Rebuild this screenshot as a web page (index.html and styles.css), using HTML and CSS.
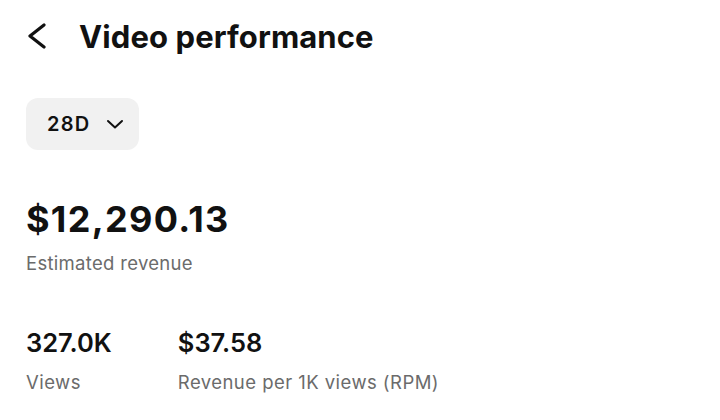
FILE: index.html
```html
<!DOCTYPE html>
<html>
<head>
<meta charset="utf-8">
<link rel="stylesheet" href="styles.css">
</head>
<body>
<div class="page">
  <header class="header">
    <svg class="back" width="20" height="26" viewBox="0 0 20 26"><path d="M17 2 L3 13 L17 24" fill="none" stroke="#111" stroke-width="3.2" stroke-linecap="round" stroke-linejoin="round"/></svg>
    <h1 class="title">Video performance</h1>
  </header>
  <button class="pill">
    <span class="pill-text">28D</span>
    <svg class="chev" width="18" height="10" viewBox="0 0 18 10"><path d="M2 2 L9 8.5 L16 2" fill="none" stroke="#111" stroke-width="2" stroke-linecap="round" stroke-linejoin="round"/></svg>
  </button>
  <section class="main-stat">
    <div class="big">$12,290.13</div>
    <div class="label">Estimated revenue</div>
  </section>
  <section class="stats">
    <div class="stat">
      <div class="num">327.0K</div>
      <div class="label">Views</div>
    </div>
    <div class="stat">
      <div class="num">$37.58</div>
      <div class="label">Revenue per 1K views (RPM)</div>
    </div>
  </section>
</div>
</body>
</html>
```
FILE: styles.css
```css
* { box-sizing: border-box; }
html, body { margin: 0; padding: 0; background: #fff; }
body { font-family: Inter, "Noto Sans", sans-serif; color: #111; }
.page { padding: 0 0 0 26px; }
.header { display: flex; align-items: center; height: 72px; }
.back { margin-left: 1px; margin-right: 32px; }
.title { font-size: 31px; font-weight: 700; margin: 0; letter-spacing: 0.1px; }
.pill { display: flex; align-items: center; gap: 15px; margin-top: 26px; height: 52px; padding: 0 15px 0 21px; border: 0; border-radius: 12px; background: #f1f1f1; font-family: inherit; color: #111; }
.pill-text { font-size: 20px; font-weight: 600; letter-spacing: 1.3px; }
.main-stat { margin-top: 48px; }
.big { font-size: 36px; font-weight: 700; line-height: 42px; letter-spacing: 1.3px; }
.label { font-size: 18.5px; color: #6b6b6b; margin-top: 12px; letter-spacing: 0.3px; }
.stats { display: flex; gap: 66px; margin-top: 54px; }
.num { font-size: 25.5px; font-weight: 600; line-height: 30px; letter-spacing: 0px; }
.stat .label { margin-top: 13px; letter-spacing: 0.45px; }
```
